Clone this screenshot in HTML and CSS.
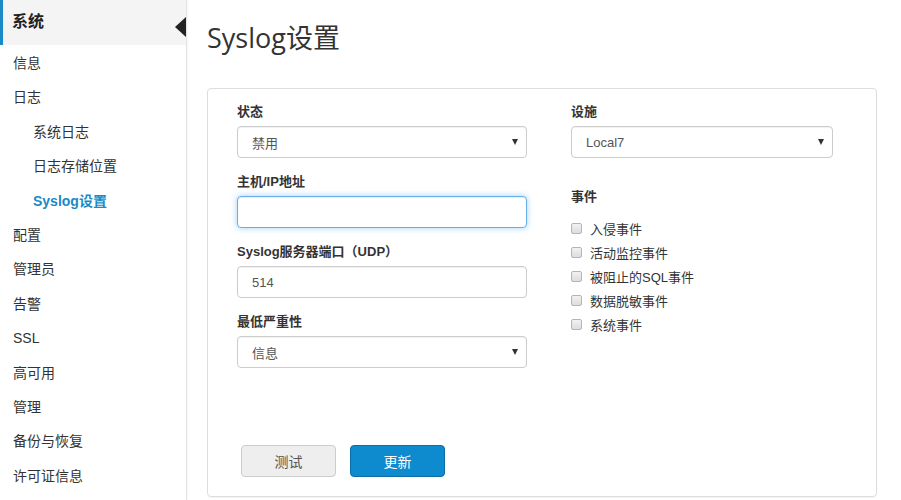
FILE: index.html
```html
<!DOCTYPE html>
<html lang="zh-CN">
<head>
<meta charset="utf-8">
<title>Syslog设置</title>
<link rel="stylesheet" href="styles.css">
</head>
<body>
<div class="layout">
  <aside class="sidebar">
    <div class="side-head">系统<span class="collapse-arrow"></span></div>
    <ul class="side-list">
      <li class="side-item">信息</li>
      <li class="side-item">日志</li>
      <li class="side-item sub">系统日志</li>
      <li class="side-item sub">日志存储位置</li>
      <li class="side-item sub active">Syslog设置</li>
      <li class="side-item">配置</li>
      <li class="side-item">管理员</li>
      <li class="side-item">告警</li>
      <li class="side-item">SSL</li>
      <li class="side-item">高可用</li>
      <li class="side-item">管理</li>
      <li class="side-item">备份与恢复</li>
      <li class="side-item">许可证信息</li>
    </ul>
  </aside>
  <main class="main">
    <h1 class="page-title">Syslog设置</h1>
    <section class="panel">
      <div class="cols">
        <div class="col-left">
          <div class="group">
            <div class="label">状态</div>
            <div class="select"><span>禁用</span><span class="caret"></span></div>
          </div>
          <div class="group">
            <div class="label">主机/IP地址</div>
            <input class="input focus" type="text" value="">
          </div>
          <div class="group">
            <div class="label">Syslog服务器端口（UDP）</div>
            <input class="input" type="text" value="514">
          </div>
          <div class="group">
            <div class="label">最低严重性</div>
            <div class="select"><span>信息</span><span class="caret"></span></div>
          </div>
        </div>
        <div class="col-right">
          <div class="group">
            <div class="label">设施</div>
            <div class="select"><span>Local7</span><span class="caret"></span></div>
          </div>
          <div class="label events-label">事件</div>
          <ul class="checks">
            <li class="check"><span class="box"></span>入侵事件</li>
            <li class="check"><span class="box"></span>活动监控事件</li>
            <li class="check"><span class="box"></span>被阻止的SQL事件</li>
            <li class="check"><span class="box"></span>数据脱敏事件</li>
            <li class="check"><span class="box"></span>系统事件</li>
          </ul>
        </div>
      </div>
      <div class="actions">
        <button class="btn btn-default">测试</button>
        <button class="btn btn-primary">更新</button>
      </div>
    </section>
  </main>
</div>
</body>
</html>
```
FILE: styles.css
```css
* { box-sizing: border-box; }
html, body { margin: 0; padding: 0; background: #fff; }
body {
  font-family: "Liberation Sans", "Noto Sans CJK SC", sans-serif;
  color: #333;
  width: 901px;
  height: 500px;
  overflow: hidden;
}
.layout { display: flex; height: 500px; }

.sidebar {
  width: 187px;
  flex: none;
  border-right: 1px solid #e3e3e3;
  box-shadow: 1px 0 2px rgba(0,0,0,0.04);
}
.side-head {
  position: relative;
  height: 45px;
  background: #f4f4f4;
  border-left: 3px solid #1a8ac6;
  padding-left: 9px;
  font-size: 16px;
  font-weight: bold;
  line-height: 44px;
  color: #222;
}
.collapse-arrow {
  position: absolute;
  right: 0;
  top: 17px;
  width: 0;
  height: 0;
  border-top: 10px solid transparent;
  border-bottom: 10px solid transparent;
  border-right: 11px solid #222;
}
.side-list { list-style: none; margin: 0; padding: 1px 0 0 0; }
.side-item {
  height: 34.4px;
  line-height: 34px;
  padding-left: 13px;
  font-size: 14px;
  color: #333;
}
.side-item.sub { padding-left: 33px; }
.side-item.active { color: #1a8ac6; font-weight: bold; }

.main { flex: 1; padding: 20px 24px 0 20px; }
.page-title {
  margin: 0 0 32px 0;
  font-family: "Open Sans", "Noto Sans CJK SC", sans-serif;
  font-weight: normal;
  font-size: 27px;
  line-height: 36px;
  color: #333;
}
.panel {
  width: 670px;
  height: 409px;
  border: 1px solid #ddd;
  border-radius: 4px;
  padding: 13px 29px 19px 29px;
  box-shadow: 0 1px 1px rgba(0,0,0,0.04);
}
.cols { display: flex; gap: 44px; }
.col-left { width: 290px; }
.col-right { width: 262px; }
.group { padding-bottom: 14px; }
.label {
  font-size: 13px;
  font-weight: bold;
  line-height: 20px;
  margin-bottom: 4px;
  color: #333;
}
.select, .input {
  display: flex;
  align-items: center;
  justify-content: space-between;
  width: 100%;
  height: 32px;
  border: 1px solid #ccc;
  border-radius: 4px;
  padding: 0 8px 0 14px;
  font-family: "Liberation Sans", "Noto Sans CJK SC", sans-serif;
  font-size: 13px;
  color: #555;
  background: #fff;
  box-shadow: inset 0 1px 1px rgba(0,0,0,0.06);
}
.input { display: block; outline: none; }
.input.focus {
  border-color: #66afe9;
  box-shadow: inset 0 1px 1px rgba(0,0,0,0.075), 0 0 6px rgba(102,175,233,0.6);
}
.caret {
  width: 0;
  height: 0;
  border-top: 6px solid #333;
  border-left: 3.5px solid transparent;
  border-right: 3.5px solid transparent;
}
.events-label { margin-top: 15px; margin-bottom: 9px; }
.checks { list-style: none; margin: 0; padding: 0; }
.check {
  display: flex;
  align-items: center;
  height: 24px;
  font-size: 13px;
  color: #333;
}
.box {
  width: 11px;
  height: 11px;
  margin-right: 8px;
  border: 1px solid #b5b5b5;
  border-radius: 2px;
  background: linear-gradient(#f2f2f2, #dcdcdc);
}
.actions { display: flex; gap: 14px; margin-top: 63px; padding-left: 4px; }
.btn {
  width: 95px;
  height: 32px;
  border-radius: 4px;
  font-family: "Liberation Sans", "Noto Sans CJK SC", sans-serif;
  font-size: 14px;
  padding: 0;
}
.btn-default { background: #eee; border: 1px solid #ccc; color: #555; }
.btn-primary { background: #0e8ace; border: 1px solid #0a6ea6; color: #fff; }
```
